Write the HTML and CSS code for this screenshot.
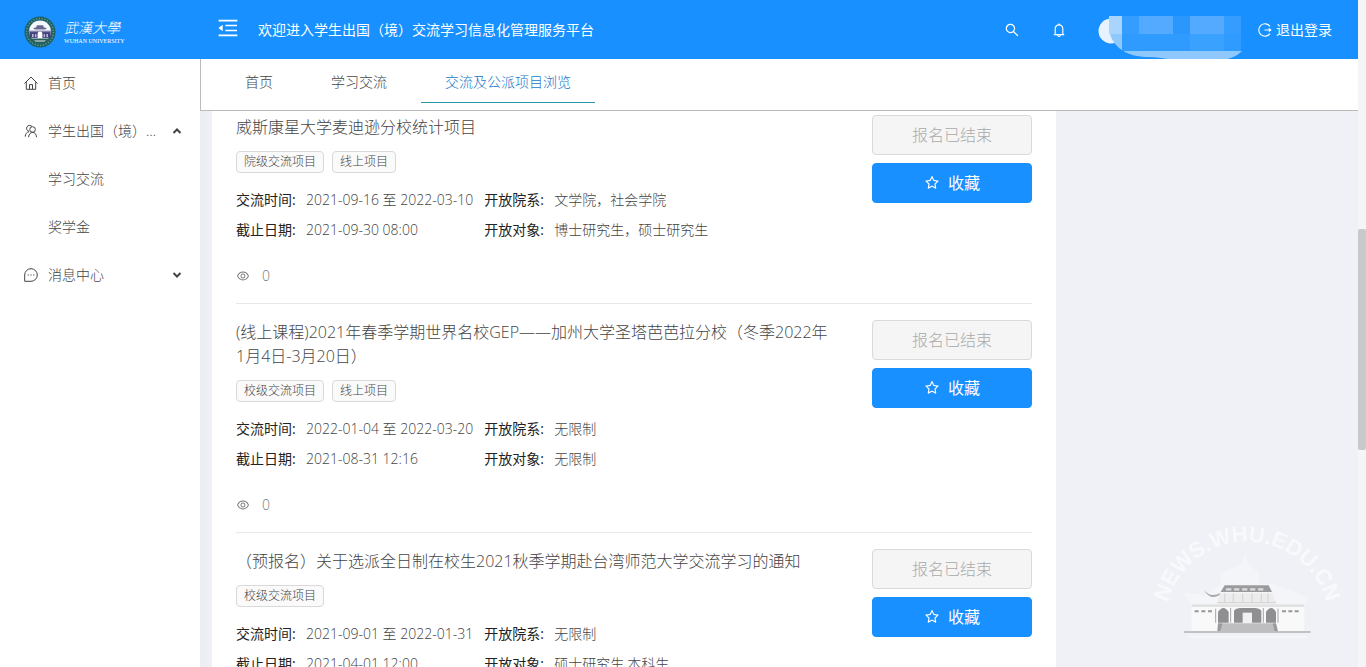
FILE: index.html
```
<!DOCTYPE html>
<html lang="zh-CN">

<head>
    <meta charset="UTF-8">
    <meta name="viewport" content="width=device-width, initial-scale=1.0">
    <title>学生出国（境）交流学习信息化管理服务平台</title>
    <link rel="stylesheet" href="styles.css">
</head>

<body>
    <svg class="sprite" aria-hidden="true">
        <symbol id="star" viewBox="0 0 1024 1024">
            <path d="M908.1 353.1l-253.9-36.9L540.7 86.1c-3.1-6.3-8.2-11.4-14.5-14.5-15.8-7.8-35-1.3-42.9 14.5L369.8 316.2l-253.9 36.9c-7 1-13.4 4.3-18.3 9.3a32.05 32.05 0 0 0 .6 45.3l183.7 179.1-43.4 252.9a31.95 31.95 0 0 0 46.4 33.7L512 754l227.1 119.4c6.2 3.3 13.4 4.4 20.3 3.2 17.4-3 29.1-19.5 26.1-36.9l-43.4-252.9 183.7-179.1c5-4.9 8.3-11.3 9.3-18.3 2.7-17.5-9.5-33.7-27-36.3zM664.8 561.6l36.1 210.3L512 672.7 323.1 772l36.1-210.3-152.8-149L417.6 382 512 190.7 606.4 382l211.2 30.7-152.8 148.9z" />
        </symbol>
        <symbol id="eye" viewBox="0 0 1024 1024">
            <path d="M942.2 486.2C847.4 286.5 704.1 186 512 186c-192.2 0-335.4 100.5-430.2 300.3a60.3 60.3 0 0 0 0 51.5C176.6 737.5 319.9 838 512 838c192.2 0 335.4-100.5 430.2-300.3 7.7-16.2 7.7-35 0-51.5zM512 766c-161.3 0-279.4-81.8-362.7-254C232.6 339.8 350.7 258 512 258c161.3 0 279.4 81.8 362.7 254C791.5 684.2 673.4 766 512 766zm-4-430c-97.2 0-176 78.8-176 176s78.8 176 176 176 176-78.8 176-176-78.8-176-176-176zm0 288c-61.9 0-112-50.1-112-112s50.1-112 112-112 112 50.1 112 112-50.1 112-112 112z" />
        </symbol>
    </svg>

    <div class="page">
        <header class="header">
            <a class="logo" href="#">
                <svg class="emblem" viewBox="0 0 32 32" aria-hidden="true">
                    <circle cx="16" cy="16" r="15.5" fill="#1f6064" />
                    <circle cx="16" cy="16" r="13.4" fill="none" stroke="#5c9a86" stroke-width="1.6" stroke-dasharray="1.2 1.6" />
                    <circle cx="16" cy="15.6" r="11" fill="#f4f6fb" />
                    <path d="M9 12l3-.6 1-2.2h6l1 2.2 3 .6-2 1.6H11z" fill="#6a6790" />
                    <path d="M5.4 15.5h21.2v6.4H5.4z" fill="#43427e" />
                    <path d="M4.6 14.6h22.8v1.6H4.6z" fill="#8483ad" />
                    <path d="M13.6 22v-4.2a2.4 2.4 0 0 1 4.8 0V22z" fill="#fff" />
                    <path d="M8 18h1.6v3H8zM11 18h1.4v3H11zM19.6 18H21v3h-1.4zM22.4 18H24v3h-1.6z" fill="#b9b8d6" />
                    <path d="M6 22.6h20a12 12 0 0 1-20 0z" fill="#2b5f5c" />
                    <path d="M10 24.4h12l-1.6 1.2h-8.8z" fill="#e3ecec" />
                </svg>
                <span class="logo-text">
                    <span class="logo-cn">武漢大學</span>
                    <span class="logo-en">WUHAN UNIVERSITY</span>
                </span>
            </a>
            <button class="fold" aria-label="收起菜单">
                <svg width="24" height="24" viewBox="0 0 1024 1024" fill="currentColor">
                    <path d="M408 442h480c4.400 0 8-3.600 8-8v-56c0-4.400-3.600-8-8-8H408c-4.400 0-8 3.600-8 8v56c0 4.400 3.600 8 8 8zm-8 204c0 4.400 3.600 8 8 8h480c4.400 0 8-3.600 8-8v-56c0-4.400-3.600-8-8-8H408c-4.400 0-8 3.600-8 8v56zm504-486H120c-4.400 0-8 3.600-8 8v56c0 4.400 3.600 8 8 8h784c4.400 0 8-3.600 8-8v-56c0-4.400-3.600-8-8-8zm0 632H120c-4.400 0-8 3.600-8 8v56c0 4.400 3.600 8 8 8h784c4.400 0 8-3.600 8-8v-56c0-4.400-3.600-8-8-8zM115.400 518.900L271.700 642c5.800 4.600 14.400.5 14.400-6.900V388.900c0-7.400-8.500-11.500-14.400-6.900L115.400 505.100a8.740 8.740 0 0 0 0 13.800z" />
                </svg>
            </button>
            <h1 class="welcome">欢迎进入学生出国（境）交流学习信息化管理服务平台</h1>
            <button class="header-icon" aria-label="搜索">
                <svg width="16" height="16" viewBox="0 0 1024 1024" fill="currentColor">
                    <path d="M909.600 854.500L649.900 594.800C690.200 542.700 712 479 712 412c0-80.200-31.300-155.400-87.900-212.100-56.600-56.700-132-87.900-212.100-87.900s-155.500 31.300-212.100 87.900C143.200 256.500 112 331.800 112 412c0 80.100 31.300 155.500 87.900 212.100C256.500 680.800 331.800 712 412 712c67 0 130.600-21.800 182.700-62l259.700 259.600a8.200 8.200 0 0 0 11.600 0l43.600-43.500a8.200 8.200 0 0 0 0-11.600zM570.400 570.400C528 612.700 471.800 636 412 636s-116-23.300-158.400-65.600C211.300 528 188 471.800 188 412s23.300-116.100 65.600-158.400C296 211.300 352.200 188 412 188s116.100 23.200 158.400 65.600S636 352.200 636 412s-23.300 116.100-65.600 158.400z" />
                </svg>
            </button>
            <button class="header-icon" aria-label="通知">
                <svg width="16" height="16" viewBox="0 0 1024 1024" fill="currentColor">
                    <path d="M816 768h-24V428c0-141.100-104.300-257.800-240-277.200V112c0-22.100-17.900-40-40-40s-40 17.900-40 40v38.800C336.300 170.200 232 286.900 232 428v340h-24c-17.700 0-32 14.300-32 32v32c0 4.400 3.600 8 8 8h216c0 61.800 50.200 112 112 112s112-50.200 112-112h216c4.400 0 8-3.600 8-8v-32c0-17.700-14.300-32-32-32zM512 888c-26.500 0-48-21.500-48-48h96c0 26.500-21.500 48-48 48zM304 768V428c0-55.600 21.600-107.800 60.900-147.100S456.400 220 512 220c55.600 0 107.800 21.600 147.100 60.900S720 372.400 720 428v340H304z" />
                </svg>
            </button>
            <svg class="user" viewBox="0 0 148 46" aria-hidden="true">
                <circle cx="13" cy="16" r="12.500" fill="#e6f3ff" />
                <path d="M12 19h12v17h120c-6 6-14 9-24 9H84c-16 0-20-3-34-3-20 0-34-9-38-23z" fill="#8fc8fc" />
                <path d="M11 1h13v18H11z" fill="#a9d4fc" />
                <path d="M24 1h119v35H24z" fill="#2f9bff" />
                <path d="M41 1h34v18H41zM92 1h34v18H92z" fill="#53aaff" />
                <path d="M24 1h17v18H24zM126 1h17v18h-17z" fill="#349dff" />
                <path d="M75 1h17v18H75z" fill="#2a97ff" />
                <path d="M92 19h17v17H92zM109 19h17v17h-17z" fill="#3ba1fe" />
            </svg>
            <a class="logout" href="#">
                <svg width="14" height="14" viewBox="0 0 14 14" fill="none" stroke="currentColor" stroke-width="1.100" aria-hidden="true">
                    <path d="M12 3.400A6.200 6.200 0 1 0 12 10.600M6.500 7h6M10.800 5.400L12.800 7l-2 1.600" />
                </svg>
                退出登录
            </a>
        </header>

        <nav class="sidebar">
            <a class="menu-item" href="#">
                <svg class="menu-icon" viewBox="0 0 14 14" aria-hidden="true">
                    <path d="M.5 7.500L7 1l6.500 6.500M2.300 6.200v7.100h9.400V6.200M5.500 13V8.600h3V13" />
                </svg>
                <span>首页</span>
            </a>
            <button class="menu-item">
                <svg class="menu-icon" viewBox="0 0 14 14" aria-hidden="true">
                    <path d="M5 7.300A3 3 0 1 1 8 2.600M1.200 12.600c0-2.600 1.600-4.400 4-5M8.600 2.700a2.800 2.800 0 1 1-.1 5.600 2.800 2.800 0 0 1 .1-5.600zM4.600 13.200c.3-3 1.800-4.700 4-4.900 2.300.2 3.700 1.900 4 4.900" />
                </svg>
                <span class="menu-label">学生出国（境）交流</span>
                <svg class="caret" viewBox="0 0 10 10" aria-hidden="true"><path d="M1.500 7L5 3.500 8.500 7" /></svg>
            </button>
            <a class="menu-item sub" href="#">学习交流</a>
            <a class="menu-item sub" href="#">奖学金</a>
            <button class="menu-item">
                <svg class="menu-icon" viewBox="0 0 14 14" aria-hidden="true">
                    <path d="M.7 13.300V7A6.300 6.300 0 1 1 7 13.300zM3.600 7h1.200M6.400 7h1.200M9.200 7h1.200" />
                </svg>
                <span class="menu-label">消息中心</span>
                <svg class="caret" viewBox="0 0 10 10" aria-hidden="true"><path d="M1.500 3L5 6.500 8.500 3" /></svg>
            </button>
        </nav>

        <main class="main">
            <nav class="tabs">
                <a class="tab" href="#">首页</a>
                <a class="tab" href="#">学习交流</a>
                <a class="tab active" href="#">交流及公派项目浏览</a>
            </nav>
            <div class="content">
                <div class="list">
                    <article class="project">
                        <div class="info">
                            <h2 class="title">威斯康星大学麦迪逊分校统计项目</h2>
                            <div class="tags"><span class="tag">院级交流项目</span><span class="tag">线上项目</span></div>
                            <dl class="details">
                                <div><dt>交流时间:</dt><dd>2021-09-16 至 2022-03-10</dd></div>
                                <div><dt>开放院系:</dt><dd>文学院，社会学院</dd></div>
                                <div><dt>截止日期:</dt><dd>2021-09-30 08:00</dd></div>
                                <div><dt>开放对象:</dt><dd>博士研究生，硕士研究生</dd></div>
                            </dl>
                            <div class="views"><svg class="eye"><use href="#eye" /></svg>0</div>
                        </div>
                        <div class="actions">
                            <button class="btn" disabled>报名已结束</button>
                            <button class="btn primary"><svg class="star"><use href="#star" /></svg>收藏</button>
                        </div>
                    </article>

                    <article class="project">
                        <div class="info">
                            <h2 class="title">(线上课程)2021年春季学期世界名校GEP——加州大学圣塔芭芭拉分校（冬季2022年1月4日-3月20日）</h2>
                            <div class="tags"><span class="tag">校级交流项目</span><span class="tag">线上项目</span></div>
                            <dl class="details">
                                <div><dt>交流时间:</dt><dd>2022-01-04 至 2022-03-20</dd></div>
                                <div><dt>开放院系:</dt><dd>无限制</dd></div>
                                <div><dt>截止日期:</dt><dd>2021-08-31 12:16</dd></div>
                                <div><dt>开放对象:</dt><dd>无限制</dd></div>
                            </dl>
                            <div class="views"><svg class="eye"><use href="#eye" /></svg>0</div>
                        </div>
                        <div class="actions">
                            <button class="btn" disabled>报名已结束</button>
                            <button class="btn primary"><svg class="star"><use href="#star" /></svg>收藏</button>
                        </div>
                    </article>

                    <article class="project">
                        <div class="info">
                            <h2 class="title">（预报名）关于选派全日制在校生2021秋季学期赴台湾师范大学交流学习的通知</h2>
                            <div class="tags"><span class="tag">校级交流项目</span></div>
                            <dl class="details">
                                <div><dt>交流时间:</dt><dd>2021-09-01 至 2022-01-31</dd></div>
                                <div><dt>开放院系:</dt><dd>无限制</dd></div>
                                <div><dt>截止日期:</dt><dd>2021-04-01 12:00</dd></div>
                                <div><dt>开放对象:</dt><dd>硕士研究生,本科生</dd></div>
                            </dl>
                        </div>
                        <div class="actions">
                            <button class="btn" disabled>报名已结束</button>
                            <button class="btn primary"><svg class="star"><use href="#star" /></svg>收藏</button>
                        </div>
                    </article>
                </div>
            </div>
        </main>

        <div class="scrollbar"><div class="thumb"></div></div>

        <svg class="watermark" viewBox="0 0 708 471">
            <path id="arc" d="M104 342a247 247 0 0 1 494 0" fill="none" />
            <text class="watermark-text"><textPath href="#arc" startOffset="50%" text-anchor="middle">NEWS.WHU.EDU.CN</textPath></text>
            <path d="M345 132l12 34 30 22v34h40l60 22 50 20-20 26H190l-34-44 70 10 46-34v-34l60-22z" fill="#f4f5f8" />
            <path d="M185 290h338v74H185z" fill="#f9f9fa" />
            <path d="M222 240q20 26 50 8l-4 8q-28 16-46-16z" fill="#a9a9ab" />
            <path d="M272 246l12-20h132l10 20z" fill="#9b9b9d" />
            <path d="M288 238h120" stroke="#dededf" stroke-width="7" stroke-dasharray="16 8" />
            <path d="M270 250h158l10 30H262z" fill="#ececed" />
            <path d="M284 250v26M310 250v26M338 250v26M366 250v26M394 250v26M414 250v26M262 278h176" stroke="#c4c4c6" stroke-width="2" />
            <path d="M186 283h336v8H186z" fill="#e2e2e3" />
            <path d="M264 338v-32q16-24 32 0v32zM312 338v-36q6-8 20-8h42q14 0 20 8v36zM408 338v-32q16-24 30 0v32z" fill="#8f8f91" />
            <path d="M338 308h28v32h-28z" fill="#f1f1f2" />
            <path d="M257 296v42M302 294v44M400 294v44M444 296v42" stroke="#a5a5a7" stroke-width="3" />
            <path d="M278 340h150l14 24H264z" fill="#bebec0" />
            <path d="M264 340h14l-8 24h-8zM428 340h10l6 24h-10z" fill="#9a9a9c" />
            <path d="M194 304h12M214 304h12M234 304h12M456 304h12M475 304h12M494 304h12" stroke="#98989a" stroke-width="6" />
            <path d="M162 366h380" stroke="#b2b2b4" stroke-width="4" />
            <path d="M176 380h356" stroke="#f6f6f8" stroke-width="6" />
        </svg>
    </div>
</body>

</html>
```
FILE: styles.css
```
* {
    box-sizing: border-box;
}

body {
    margin: 0;
    font-family: "Open Sans", "Noto Sans CJK SC", sans-serif;
    font-size: 14px;
    font-weight: 300;
    line-height: 22px;
    color: #444;
}

h1, h2, dl, dd {
    margin: 0;
    font-weight: inherit;
}

a {
    color: inherit;
    text-decoration: none;
}

button {
    border: 0;
    padding: 0;
    background: none;
    color: inherit;
    font: inherit;
}

.sprite {
    display: none;
}

.page {
    display: grid;
    grid-template-columns: 200px minmax(0, 1fr) 8px;
    grid-template-rows: 59px minmax(0, 1fr);
    height: 100vh;
    overflow: hidden;
}

/* header */

.header {
    grid-column: 1 / 3;
    display: flex;
    align-items: center;
    padding: 0 26px 0 24px;
    background: #1890ff;
    color: #fff;
}

.logo {
    display: flex;
    align-items: center;
    gap: 8px;
    width: 192px;
    padding-top: 4px;
}

.emblem {
    width: 32px;
    height: 32px;
}

.logo-text {
    display: flex;
    flex-direction: column;
    padding-top: 2px;
}

.logo-cn {
    font-family: "Liberation Serif", "Noto Sans CJK TC", serif;
    font-size: 14px;
    font-style: italic;
    line-height: 16px;
}

.logo-en {
    font-family: "Liberation Serif", serif;
    font-size: 6px;
    line-height: 8px;
}

.fold {
    width: 24px;
    height: 24px;
    margin: 0 18px 4px 0;
}

.fold svg,
.header-icon svg {
    display: block;
}

.welcome {
    flex: 1;
    font-size: 14px;
    font-weight: 400;
}

.header-icon {
    margin-right: 31px;
}

.user {
    width: 148px;
    height: 46px;
    margin: 16px 12px 0 0;
}

.logout {
    display: flex;
    align-items: center;
    gap: 4px;
    font-weight: 400;
}

/* sidebar */

.sidebar {
    z-index: 1;
    padding-top: 4px;
    background: #fff;
}

.menu-item {
    display: flex;
    align-items: center;
    gap: 10px;
    width: 100%;
    height: 40px;
    margin-bottom: 8px;
    padding: 0 18px 0 24px;
    text-align: left;
}

.menu-item.sub {
    padding-left: 48px;
}

.menu-icon {
    width: 14px;
    height: 14px;
    fill: none;
    stroke: #444;
}

.menu-label {
    width: 112px;
    overflow: hidden;
    white-space: nowrap;
    text-overflow: ellipsis;
}

.caret {
    width: 10px;
    height: 10px;
    margin-left: auto;
    fill: none;
    stroke: #444;
    stroke-width: 2;
}

/* tabs */

.main {
    display: flex;
    flex-direction: column;
    min-height: 0;
    background: #eff1f6;
}

.tabs {
    display: flex;
    flex: none;
    gap: 10px;
    height: 52px;
    padding-left: 20px;
    background: #fff;
    border-left: 1px solid #bbb;
    border-bottom: 1px solid #bbb;
}

.tab {
    height: 44px;
    padding: 0 24px;
    line-height: 46px;
}

.tab.active {
    color: #1a78cc;
    border-bottom: 1px solid #2a93a8;
}

/* project list */

.content {
    flex: 1;
    min-height: 0;
    overflow: hidden;
    padding: 0 302px 0 12px;
    background: linear-gradient(to right, #eaedf1, #eff1f6 12px);
}

/* list is scrolled partly under the tabs */
.list {
    margin-top: -12px;
    padding: 0 24px;
    background: #fff;
}

.project {
    display: flex;
    gap: 40px;
    padding: 16px 0;
    border-bottom: 1px solid #e8e8e8;
}

.info {
    flex: 1;
    min-width: 0;
}

.title {
    margin-bottom: 12px;
    font-size: 16px;
    line-height: 24px;
}

.tags {
    display: flex;
    gap: 8px;
    margin-bottom: 16px;
}

.tag {
    padding: 0 7px;
    border: 1px solid #d9d9d9;
    border-radius: 4px;
    background: #fafafa;
    font-size: 12px;
    line-height: 20px;
}

.details {
    display: grid;
    grid-template-columns: 5fr 7fr;
    row-gap: 8px;
    margin-bottom: 24px;
}

.details div {
    display: flex;
    gap: 8px;
}

.details dt {
    width: 62px;
    color: #222;
    font-weight: 400;
}

.details dd {
    white-space: nowrap;
}

.views {
    display: flex;
    align-items: center;
    gap: 12px;
    color: #777;
}

.eye {
    width: 14px;
    height: 14px;
    fill: currentColor;
}

.actions {
    display: flex;
    flex-direction: column;
    gap: 8px;
    width: 160px;
}

.btn {
    display: flex;
    align-items: center;
    justify-content: center;
    gap: 8px;
    height: 40px;
    border: 1px solid #d9d9d9;
    border-radius: 4px;
    background: #f5f5f5;
    color: #aaa;
    font-size: 16px;
}

.btn.primary {
    border-color: #1890ff;
    background: #1890ff;
    color: #fff;
    font-weight: 400;
}

.star {
    width: 16px;
    height: 16px;
    fill: currentColor;
}

/* page scrollbar */

.scrollbar {
    grid-column: 3;
    grid-row: 1 / 3;
    padding-top: 229px;
    background: #f5f5f6;
}

.thumb {
    height: 221px;
    border-radius: 2px;
    background: #c9c9c9;
}

.watermark {
    position: fixed;
    right: 0;
    bottom: 0;
    width: 236px;
    height: 157px;
}

.watermark-text {
    fill: #f8f9fb;
    font-family: "Liberation Sans", sans-serif;
    font-size: 66px;
    font-weight: bold;
}
```
